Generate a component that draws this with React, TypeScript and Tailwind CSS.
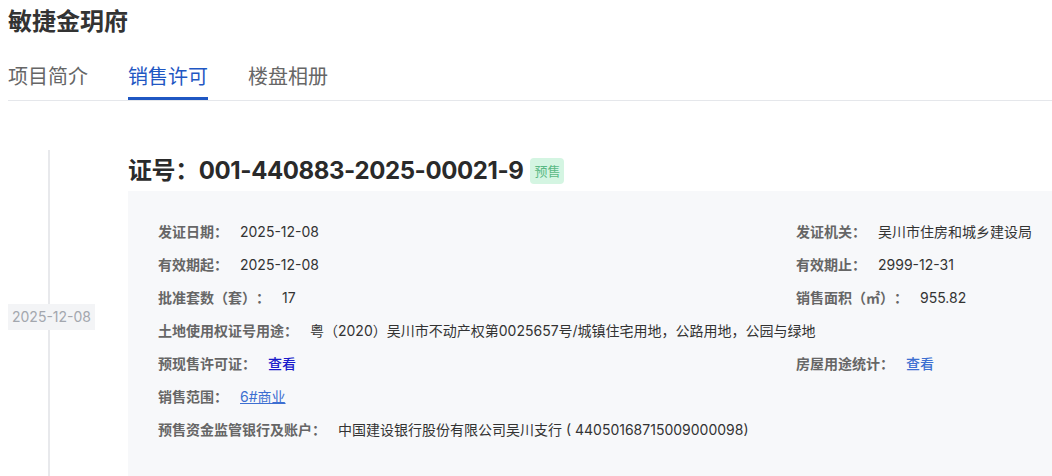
import React from "react";

type Field = { label: string; value: React.ReactNode };

function Row({ label, value }: Field) {
  return (
    <div className="flex items-center h-[33px] gap-3">
      <span className="font-bold text-[#666]">{label}</span>
      <span className="text-[#333]">{value}</span>
    </div>
  );
}

function PairRow({ left, right }: { left: Field; right?: Field }) {
  return (
    <div className="flex justify-between">
      <Row {...left} />
      {right && (
        <div className="w-[236px]">
          <Row {...right} />
        </div>
      )}
    </div>
  );
}

export default function App() {
  return (
    <div
      className="bg-white pl-2 w-[1052px] h-[476px] overflow-hidden [text-spacing-trim:space-all]"
      style={{ fontFamily: 'Inter, "Noto Sans CJK SC", sans-serif' }}
    >
      {/* TITLE */}
      <h1 className="pt-[6px] text-[24px] leading-8 font-bold text-[#333]">敏捷金玥府</h1>

      {/* TABS */}
      <div className="mt-[17px] flex gap-10 border-b border-[#e5e7eb] text-[20px] leading-7">
        <div className="pt-2 pb-[6px] border-b-[3px] border-transparent text-[#666]">项目简介</div>
        <div className="pt-2 pb-[6px] border-b-[3px] border-[#1f57c3] text-[#1f57c3]">销售许可</div>
        <div className="pt-2 pb-[6px] border-b-[3px] border-transparent text-[#666]">楼盘相册</div>
      </div>

      {/* TIMELINE ITEM */}
      <div className="mt-[49px] flex">
        <div className="relative w-[120px] shrink-0 flex items-center">
          <div className="absolute left-[40px] top-0 bottom-0 w-[2px] bg-[#e8e9ec]" />
          <span className="relative bg-[#f3f4f6] text-[#a3a7ae] text-[14px] leading-[26px] px-1">
            2025-12-08
          </span>
        </div>

        <div className="flex-1">
          {/* LICENSE NUMBER */}
          <div className="flex items-center gap-[7px] h-[41px]">
            <h2 className="text-[24px] font-bold text-[#2a2a2a] leading-8 tracking-[-0.4px]">
              证号：001-440883-2025-00021-9
            </h2>
            <span className="bg-[#d4f5e2] text-[#5bb985] text-[13px] leading-[26px] px-[4px] rounded-sm">
              预售
            </span>
          </div>

          {/* DETAILS CARD */}
          <div className="bg-[#f7f8fa] pl-[30px] pr-5 pt-[24px] pb-[37px] text-[14px]">
            <PairRow
              left={{ label: "发证日期：", value: "2025-12-08" }}
              right={{ label: "发证机关：", value: "吴川市住房和城乡建设局" }}
            />
            <PairRow
              left={{ label: "有效期起：", value: "2025-12-08" }}
              right={{ label: "有效期止：", value: "2999-12-31" }}
            />
            <PairRow
              left={{ label: "批准套数（套）：", value: "17" }}
              right={{ label: "销售面积（㎡）：", value: "955.82" }}
            />
            <Row
              label="土地使用权证号用途："
              value="粤（2020）吴川市不动产权第0025657号/城镇住宅用地，公路用地，公园与绿地"
            />
            <PairRow
              left={{ label: "预现售许可证：", value: <a className="text-[#1a1acb] font-medium">查看</a> }}
              right={{ label: "房屋用途统计：", value: <a className="text-[#3d6fd1] font-medium">查看</a> }}
            />
            <Row label="销售范围：" value={<a className="text-[#3d6fd1] underline">6#商业</a>} />
            <Row label="预售资金监管银行及账户：" value="中国建设银行股份有限公司吴川支行 ( 44050168715009000098)" />
          </div>
        </div>
      </div>
    </div>
  );
}
